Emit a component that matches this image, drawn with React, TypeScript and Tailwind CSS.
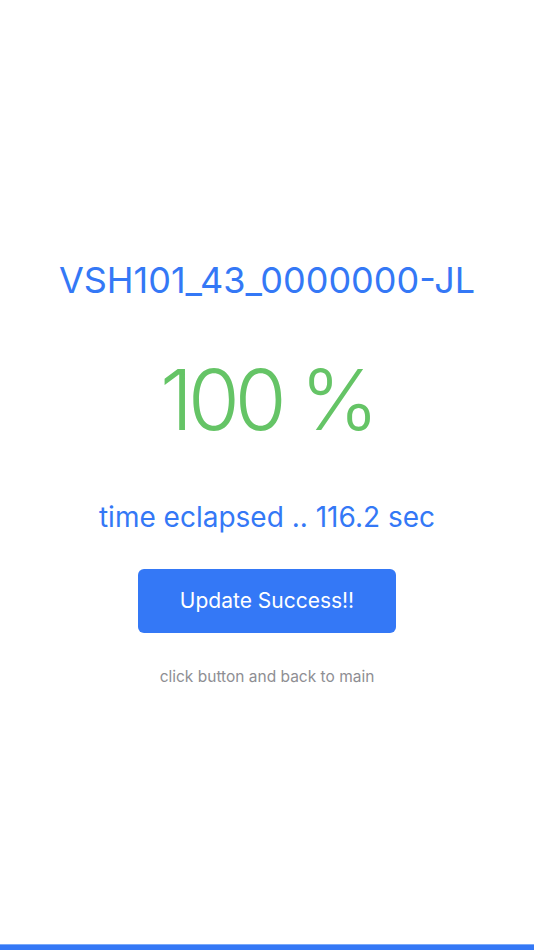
export default function App() {
  return (
    <div
      className="flex h-[950px] w-full flex-col items-center bg-white"
      style={{ fontFamily: 'Inter, Roboto, "Noto Sans", sans-serif' }}
    >
      {/* firmware name */}
      <h1 className="mt-[258px] text-[36px] leading-[44px] font-normal tracking-[0px] text-[#3478f6]">
        VSH101_43_0000000-JL
      </h1>

      {/* progress */}
      <div className="mt-[56px] text-[84px] leading-[84px] font-light tracking-[-5px] text-[#65c466]">100 %</div>

      <p className="mt-[58px] text-[28px] leading-[34px] text-[#3478f6]">time eclapsed .. 116.2 sec</p>

      <button className="mt-[35px] h-[64px] w-[258px] rounded-[6px] bg-[#3478f6] text-[21px] text-white">
        Update Success!!
      </button>

      <p className="mt-[34px] text-[15.5px] leading-[20px] text-[#8e8e93]">click button and back to main</p>

      <div className="mt-auto h-[6px] w-full border-t border-[#7aa9f9] bg-[#3478f6]" />
    </div>
  )
}
